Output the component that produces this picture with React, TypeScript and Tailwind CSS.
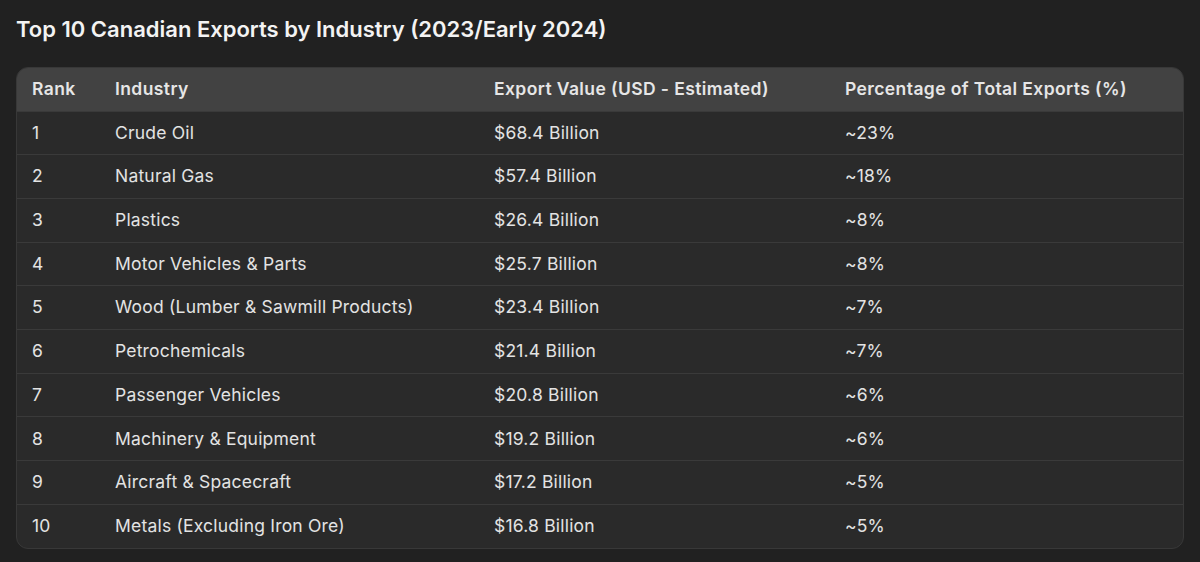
import React from 'react';

interface ExportRow {
  rank: number;
  industry: string;
  value: string;
  share: string;
}

const rows: ExportRow[] = [
  { rank: 1, industry: 'Crude Oil', value: '$68.4 Billion', share: '~23%' },
  { rank: 2, industry: 'Natural Gas', value: '$57.4 Billion', share: '~18%' },
  { rank: 3, industry: 'Plastics', value: '$26.4 Billion', share: '~8%' },
  { rank: 4, industry: 'Motor Vehicles & Parts', value: '$25.7 Billion', share: '~8%' },
  { rank: 5, industry: 'Wood (Lumber & Sawmill Products)', value: '$23.4 Billion', share: '~7%' },
  { rank: 6, industry: 'Petrochemicals', value: '$21.4 Billion', share: '~7%' },
  { rank: 7, industry: 'Passenger Vehicles', value: '$20.8 Billion', share: '~6%' },
  { rank: 8, industry: 'Machinery & Equipment', value: '$19.2 Billion', share: '~6%' },
  { rank: 9, industry: 'Aircraft & Spacecraft', value: '$17.2 Billion', share: '~5%' },
  { rank: 10, industry: 'Metals (Excluding Iron Ore)', value: '$16.8 Billion', share: '~5%' },
];

export default function App() {
  return (
    <div
      className="min-h-[562px] w-[1200px] bg-[#212121] px-4 pt-[15px] text-[#ececec]"
      style={{ fontFamily: 'Inter, "Noto Sans", sans-serif' }}
    >
      {/* Title */}
      <h2 className="text-[22px] font-semibold leading-[28px] text-[#f3f3f3]">
        Top 10 Canadian Exports by Industry (2023/Early 2024)
      </h2>

      {/* Table */}
      <div className="mt-[24px] overflow-hidden rounded-[12px] border border-[#383838] bg-[#2a2a2a]">
        <table className="w-full border-collapse text-left text-[17.5px] tracking-[0.2px]">
          <thead>
            <tr className="h-[43px] bg-[#424242] text-[#e6e6e6] tracking-[0.4px]">
              <th className="w-[83px] pl-[15px] pr-4 font-semibold">Rank</th>
              <th className="w-[379px] pl-[15px] pr-4 font-semibold">Industry</th>
              <th className="w-[351px] pl-[15px] pr-4 font-semibold">Export Value (USD - Estimated)</th>
              <th className="pl-[15px] pr-4 font-semibold">Percentage of Total Exports (%)</th>
            </tr>
          </thead>
          <tbody>
            {rows.map(row => (
              <tr key={row.rank} className="h-[43.7px] border-t border-[#3a3a3a] text-[#e3e3e3]">
                <td className="pl-[15px] pr-4">{row.rank}</td>
                <td className="pl-[15px] pr-4">{row.industry}</td>
                <td className="pl-[15px] pr-4">{row.value}</td>
                <td className="pl-[15px] pr-4">{row.share}</td>
              </tr>
            ))}
          </tbody>
        </table>
      </div>
    </div>
  );
}
